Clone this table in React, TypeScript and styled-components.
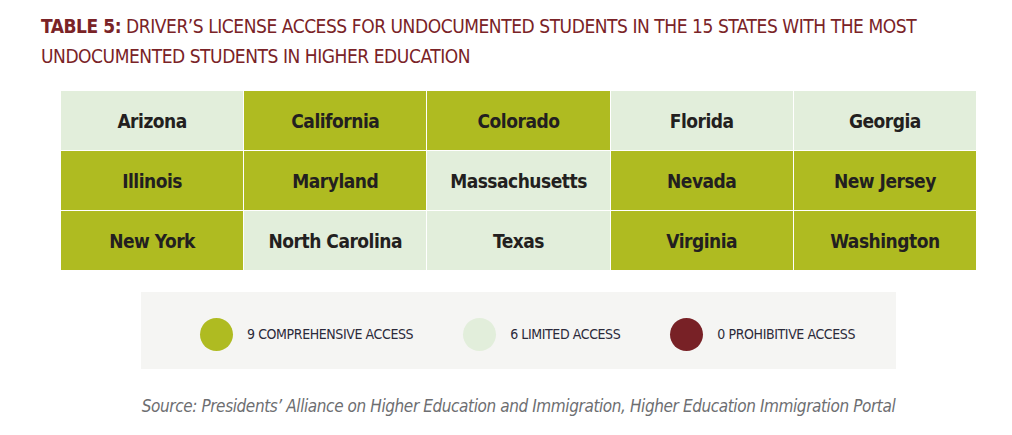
import React from "react";
import styled, { createGlobalStyle } from "styled-components";

const GlobalStyle = createGlobalStyle`
  html, body {
    margin: 0;
    padding: 0;
    background: #ffffff;
  }
  body {
    font-family: "DejaVu Sans Condensed", "Liberation Sans Narrow", "Liberation Sans", sans-serif;
  }
`;

type Access = "full" | "limited" | "none";

const colors: Record<Access, string> = {
  full: "#afbb21",
  limited: "#e2eedb",
  none: "#782126",
};

const states: { name: string; access: Access }[] = [
  { name: "Arizona", access: "limited" },
  { name: "California", access: "full" },
  { name: "Colorado", access: "full" },
  { name: "Florida", access: "limited" },
  { name: "Georgia", access: "limited" },
  { name: "Illinois", access: "full" },
  { name: "Maryland", access: "full" },
  { name: "Massachusetts", access: "limited" },
  { name: "Nevada", access: "full" },
  { name: "New Jersey", access: "full" },
  { name: "New York", access: "full" },
  { name: "North Carolina", access: "limited" },
  { name: "Texas", access: "limited" },
  { name: "Virginia", access: "full" },
  { name: "Washington", access: "full" },
];

const Page = styled.div`
  padding: 11px 0 0 41px;
`;

const Title = styled.h1`
  margin: 0;
  font-size: 19px;
  line-height: 30px;
  letter-spacing: -0.45px;
  font-weight: 400;
  color: #7a2327;
  text-transform: uppercase;
  white-space: nowrap;

  strong {
    font-weight: 700;
  }
`;

const Grid = styled.div`
  margin: 20px 0 0 20px;
  width: 915px;
  display: grid;
  grid-template-columns: repeat(5, 1fr);
  grid-template-rows: repeat(3, 59px);
  gap: 1px;
  background: #ffffff;
`;

const Cell = styled.div<{ $access: Access }>`
  background: ${(p) => colors[p.$access]};
  display: flex;
  align-items: center;
  justify-content: center;
  font-size: 19px;
  letter-spacing: -0.5px;
  font-weight: 700;
  color: #231f20;
`;

const Legend = styled.div`
  margin: 22px 0 0 100px;
  width: 755px;
  height: 77px;
  box-sizing: border-box;
  background: #f5f5f3;
  display: flex;
  align-items: center;
  padding: 7px 0 0 59px;
  gap: 50px;
`;

const LegendItem = styled.div`
  display: flex;
  align-items: center;
  gap: 14px;
`;

const Dot = styled.span<{ $access: Access }>`
  width: 33px;
  height: 33px;
  border-radius: 50%;
  background: ${(p) => colors[p.$access]};
  flex-shrink: 0;
`;

const LegendLabel = styled.span`
  font-size: 14px;
  letter-spacing: -0.4px;
  color: #2b2a3a;
  text-transform: uppercase;
  white-space: nowrap;
`;

const Source = styled.p`
  margin: 27px 0 0 100px;
  width: 755px;
  text-align: center;
  font-size: 17px;
  line-height: 20px;
  letter-spacing: -0.4px;
  font-style: italic;
  color: #6d6e71;
  white-space: nowrap;
`;

export default function App() {
  return (
    <>
      <GlobalStyle />
      <Page>
        <Title>
          <strong>Table 5:</strong> Driver’s license access for undocumented
          students in the 15 states with the most
          <br />
          undocumented students in higher education
        </Title>
        <Grid>
          {states.map((s) => (
            <Cell key={s.name} $access={s.access}>
              {s.name}
            </Cell>
          ))}
        </Grid>
        <Legend>
          <LegendItem>
            <Dot $access="full" />
            <LegendLabel>9 Comprehensive access</LegendLabel>
          </LegendItem>
          <LegendItem>
            <Dot $access="limited" />
            <LegendLabel>6 Limited access</LegendLabel>
          </LegendItem>
          <LegendItem>
            <Dot $access="none" />
            <LegendLabel>0 Prohibitive access</LegendLabel>
          </LegendItem>
        </Legend>
        <Source>
          Source: Presidents’ Alliance on Higher Education and Immigration,
          Higher Education Immigration Portal
        </Source>
      </Page>
    </>
  );
}
